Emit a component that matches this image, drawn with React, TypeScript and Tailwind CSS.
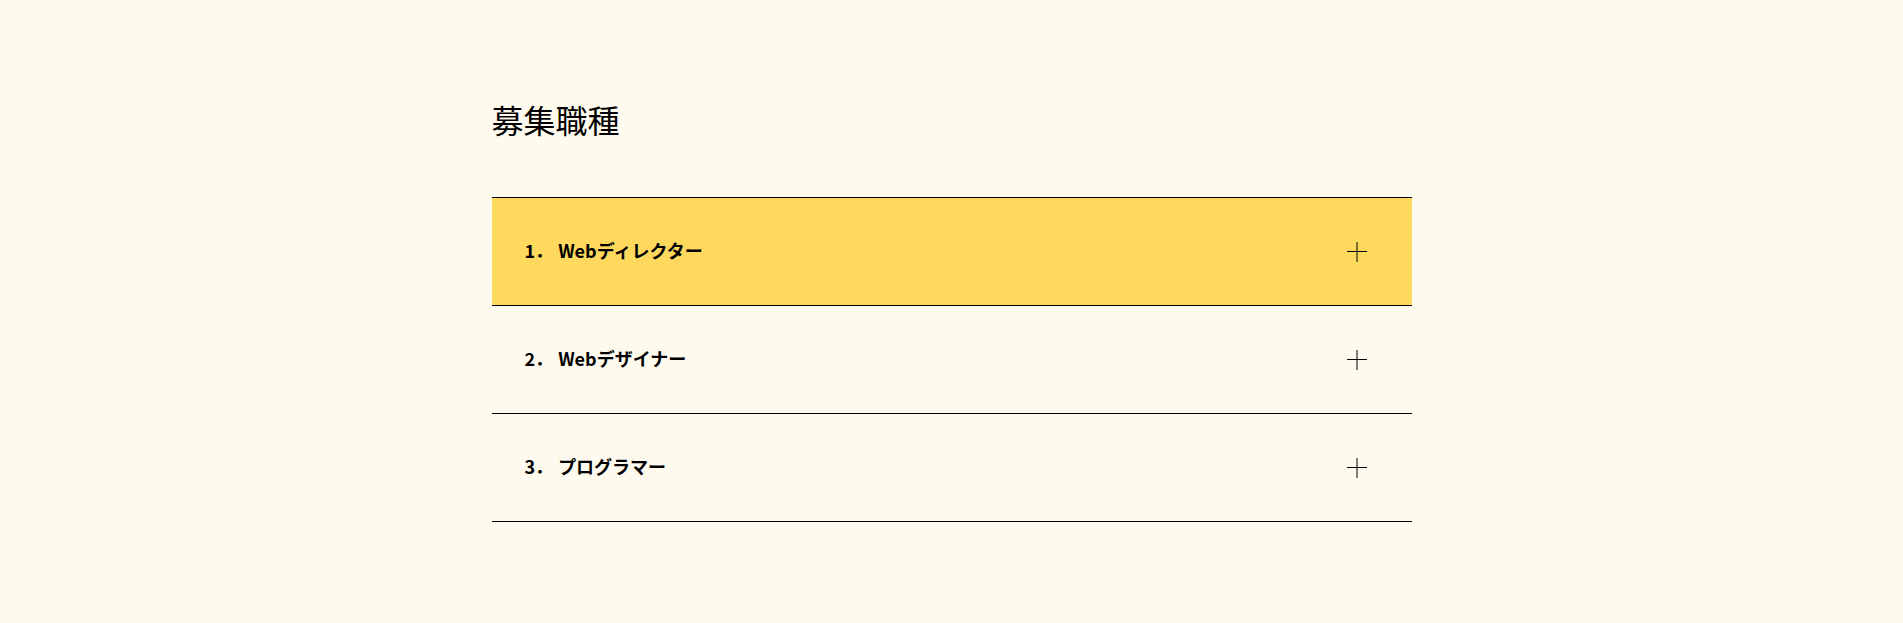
import React from "react";

const items = [
  { num: "1．", label: "Webディレクター" },
  { num: "2．", label: "Webデザイナー" },
  { num: "3．", label: "プログラマー" },
];

export default function App() {
  return (
    <div
      className="min-h-screen w-full bg-[#fffaee] text-black"
      style={{ fontFamily: '"Noto Sans CJK JP", "Noto Sans", sans-serif' }}
    >
      <div className="mx-auto w-[920px] pt-[103px] pb-[100px]">
        <h2 className="text-[32px] font-normal leading-none">募集職種</h2>
        <div className="mt-[62px] border-t border-black">
          {items.map((item, i) => (
            <div
              key={item.label}
              className={`flex h-[108px] items-center justify-between border-b border-black pl-[33px] pr-[45px] ${
                i === 0 ? "bg-[#ffd85e]" : ""
              }`}
            >
              <span className="-mt-[3px] text-[18px] font-bold leading-none">
                <span className="mr-[5px]">{item.num}</span>
                {item.label}
              </span>
              <span className="relative block h-[20px] w-[20px]">
                <span className="absolute left-0 top-[9.5px] h-px w-[20px] bg-black" />
                <span className="absolute left-[9px] top-0 h-[20px] w-[2px] bg-black/50" />
              </span>
            </div>
          ))}
        </div>
      </div>
    </div>
  );
}
